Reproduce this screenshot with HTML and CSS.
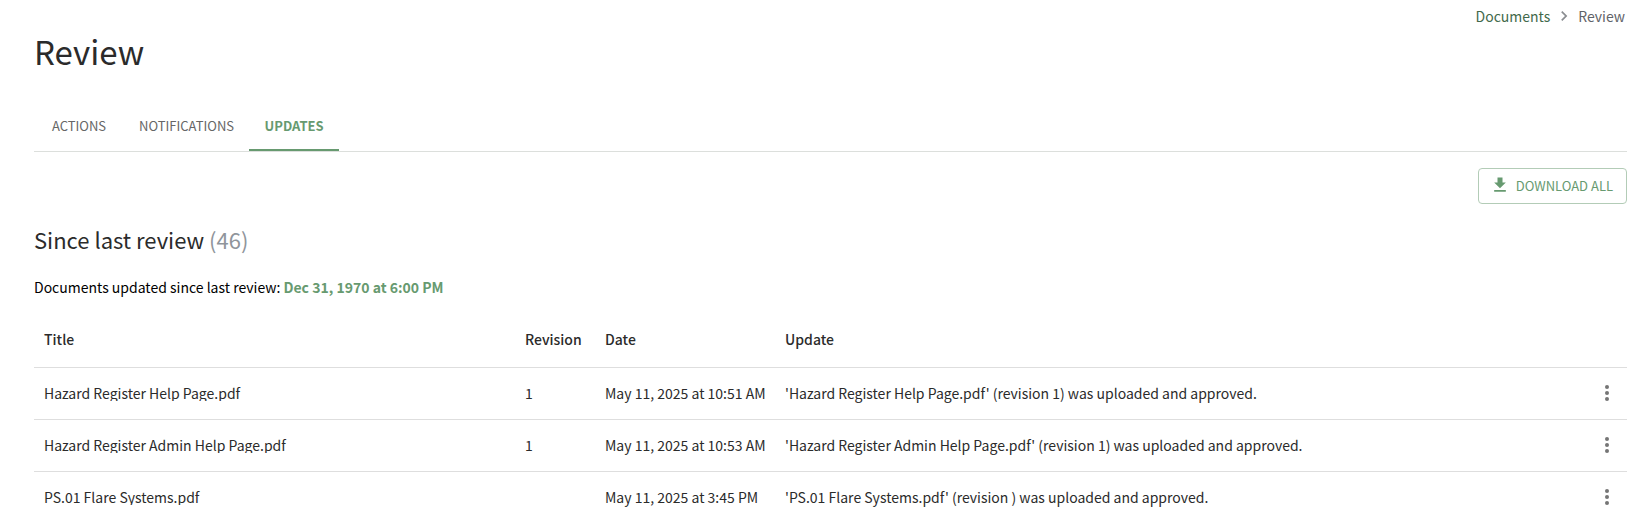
FILE: index.html
```html
<!DOCTYPE html>
<html lang="en">

<head>
    <meta charset="UTF-8">
    <meta name="viewport" content="width=device-width, initial-scale=1.0">
    <title>Review</title>
    <link rel="stylesheet" href="styles.css">
</head>

<body>
    <nav class="breadcrumbs" aria-label="Breadcrumb">
        <a href="#">Documents</a>
        <svg class="separator" viewBox="0 0 24 24" aria-hidden="true"><path d="M10 6L8.59 7.41 13.17 12l-4.58 4.59L10 18l6-6z"/></svg>
        <span>Review</span>
    </nav>

    <main>
        <h1>Review</h1>

        <div class="tabs" role="tablist">
            <button type="button" class="tab" role="tab">ACTIONS</button>
            <button type="button" class="tab" role="tab">NOTIFICATIONS</button>
            <button type="button" class="tab active" role="tab" aria-selected="true">UPDATES</button>
        </div>

        <div class="toolbar">
            <button type="button" class="download">
                <svg viewBox="0 0 24 24" aria-hidden="true"><path d="M19 9h-4V3H9v6H5l7 7 7-7zM5 18v2h14v-2H5z"/></svg>
                DOWNLOAD ALL
            </button>
        </div>

        <h2>Since last review <span class="count">(46)</span></h2>
        <p class="summary">Documents updated since last review: <b>Dec 31, 1970 at 6:00 PM</b></p>

        <table>
            <thead>
                <tr>
                    <th class="col-title">Title</th>
                    <th class="col-revision">Revision</th>
                    <th class="col-date">Date</th>
                    <th>Update</th>
                    <th class="col-menu"></th>
                </tr>
            </thead>
            <tbody>
                <tr>
                    <td><div class="doc-title">Hazard Register Help Page.pdf</div></td>
                    <td>1</td>
                    <td>May 11, 2025 at 10:51 AM</td>
                    <td>'Hazard Register Help Page.pdf' (revision 1) was uploaded and approved.</td>
                    <td><button type="button" class="menu" aria-label="More"><svg viewBox="0 0 24 24"><circle cx="12" cy="6" r="2"/><circle cx="12" cy="12" r="2"/><circle cx="12" cy="18" r="2"/></svg></button></td>
                </tr>
                <tr>
                    <td><div class="doc-title">Hazard Register Admin Help Page.pdf</div></td>
                    <td>1</td>
                    <td>May 11, 2025 at 10:53 AM</td>
                    <td>'Hazard Register Admin Help Page.pdf' (revision 1) was uploaded and approved.</td>
                    <td><button type="button" class="menu" aria-label="More"><svg viewBox="0 0 24 24"><circle cx="12" cy="6" r="2"/><circle cx="12" cy="12" r="2"/><circle cx="12" cy="18" r="2"/></svg></button></td>
                </tr>
                <tr>
                    <td><div class="doc-title">PS.01 Flare Systems.pdf</div></td>
                    <td></td>
                    <td>May 11, 2025 at 3:45 PM</td>
                    <td>'PS.01 Flare Systems.pdf' (revision ) was uploaded and approved.</td>
                    <td><button type="button" class="menu" aria-label="More"><svg viewBox="0 0 24 24"><circle cx="12" cy="6" r="2"/><circle cx="12" cy="12" r="2"/><circle cx="12" cy="18" r="2"/></svg></button></td>
                </tr>
            </tbody>
        </table>
    </main>
</body>

</html>
```

FILE: styles.css
```css
* {
    padding: 0;
    margin: 0;
    box-sizing: border-box;
}

body {
    font-family: "Noto Sans CJK SC", "Noto Sans", sans-serif;
    font-size: 14px;
    line-height: 24px;
    color: #000;
    background-color: #fff;
    padding: 4px 15px 0 34px;
}

button {
    font-family: inherit;
    background: none;
    border: none;
    cursor: pointer;
}

svg {
    display: block;
    fill: currentColor;
}

.breadcrumbs {
    display: flex;
    justify-content: flex-end;
    align-items: center;
    gap: 4px;
    color: #5f6368;
    padding-right: 2px;
}

.breadcrumbs a {
    color: #42694b;
    text-decoration: none;
}

.separator {
    width: 20px;
    height: 20px;
    color: #8a8d91;
}

h1 {
    font-size: 33px;
    font-weight: 400;
    line-height: 46px;
    color: #2b2b2b;
}

.tabs {
    display: flex;
    margin-top: 29px;
    border-bottom: 1px solid #dcdfdc;
}

.tab {
    min-width: 90px;
    height: 48px;
    padding: 0 15px 2px;
    font-size: 13px;
    color: #666;
    border-bottom: 2px solid transparent;
}

.tab.active {
    color: #679a70;
    font-weight: 700;
    border-bottom-color: #679a70;
}

.toolbar {
    display: flex;
    justify-content: flex-end;
    margin-top: 16px;
}

.download {
    display: flex;
    align-items: center;
    gap: 6px;
    height: 36px;
    padding: 0 13px 2px 11px;
    font-size: 13px;
    color: #679a70;
    border: 1px solid #b3ccb7;
    border-radius: 4px;
}

.download svg {
    width: 20px;
    height: 20px;
}

h2 {
    margin-top: 19px;
    font-size: 22px;
    font-weight: 400;
    line-height: 32px;
    color: #2b2b2b;
}

.count {
    color: #8f959b;
}

.summary {
    margin-top: 20px;
}

.summary b {
    color: #679a70;
}

table {
    width: 100%;
    margin-top: 12px;
    table-layout: fixed;
    border-collapse: collapse;
    color: #2b2b2b;
}

th,
td {
    height: 52px;
    padding: 0 0 0 10px;
    text-align: left;
    white-space: nowrap;
    border-bottom: 1px solid #dedede;
}

th {
    height: 56px;
    font-weight: 500;
}

.col-title {
    width: 481px;
}

.col-revision {
    width: 80px;
}

.col-date {
    width: 180px;
}

.col-menu {
    width: 42px;
}

/* long names are cut off at the cell edge */
.doc-title {
    line-height: 16px;
    overflow: hidden;
    text-overflow: ellipsis;
}

.menu {
    display: block;
    color: #757575;
}

.menu svg {
    width: 24px;
    height: 24px;
}
```
